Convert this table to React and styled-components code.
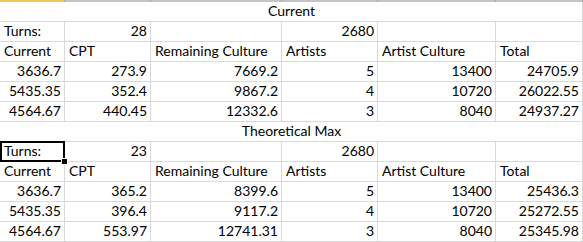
import React from 'react'
import styled, { createGlobalStyle } from 'styled-components'

const GlobalStyle = createGlobalStyle`
  html, body {
    margin: 0;
    padding: 0;
    background: #ffffff;
  }
`

const columns = [65, 86, 131, 96, 118, 87]

const sections = [
  {
    title: 'Current',
    turns: '28',
    artistCulture: '2680',
    rows: [
      ['3636.7', '273.9', '7669.2', '5', '13400', '24705.9'],
      ['5435.35', '352.4', '9867.2', '4', '10720', '26022.55'],
      ['4564.67', '440.45', '12332.6', '3', '8040', '24937.27'],
    ],
  },
  {
    title: 'Theoretical Max',
    turns: '23',
    artistCulture: '2680',
    selected: true,
    rows: [
      ['3636.7', '365.2', '8399.6', '5', '13400', '25436.3'],
      ['5435.35', '396.4', '9117.2', '4', '10720', '25272.55'],
      ['4564.67', '553.97', '12741.31', '3', '8040', '25345.98'],
    ],
  },
]

const headers = ['Current', 'CPT', 'Remaining Culture', 'Artists', 'Artist Culture', 'Total']

const App = () => {
  return (
    <>
      <GlobalStyle />
      <Sheet>
        {columns.map((w, i) => (
          <HeaderStub key={'h' + i} active={i === 0} />
        ))}
        {sections.map((s) => (
          <React.Fragment key={s.title}>
            <Title>{s.title}</Title>
            <Cell selected={s.selected}>
              Turns:
              {s.selected && <Handle />}
            </Cell>
            <Cell right>{s.turns}</Cell>
            <Cell />
            <Cell right>{s.artistCulture}</Cell>
            <Cell />
            <Cell />
            {headers.map((h) => (
              <Cell key={h}>{h}</Cell>
            ))}
            {s.rows.map((r, ri) =>
              r.map((v, ci) => (
                <Cell key={ri + '-' + ci} right>
                  {v}
                </Cell>
              ))
            )}
          </React.Fragment>
        ))}
      </Sheet>
    </>
  )
}

export default App

const Sheet = styled.div`
  display: grid;
  grid-template-columns: ${columns.map((w) => w + 'px').join(' ')};
  grid-template-rows: 2px;
  grid-auto-rows: 20px;
  width: 583px;
  font-family: Lato, 'Liberation Sans', sans-serif;
  font-size: 14px;
  color: #000000;
`
const HeaderStub = styled.div`
  background-color: ${(p) => (p.active ? '#f2c45a' : '#c4c4c4')};
  border-right: 1px solid #a9a9a9;
`
const Cell = styled.div`
  position: relative;
  box-sizing: border-box;
  display: flex;
  align-items: flex-end;
  justify-content: ${(p) => (p.right ? 'flex-end' : 'flex-start')};
  padding: 0 3px 3px 4px;
  line-height: 15px;
  white-space: nowrap;
  border-right: 1px solid #d9d9d9;
  border-bottom: 1px solid #d9d9d9;
  ${(p) =>
    p.selected &&
    `
    &::after {
      content: '';
      position: absolute;
      left: 0;
      top: -1px;
      right: -1px;
      bottom: -1px;
      border: 2px solid #000000;
      z-index: 1;
    }
  `}
`
const Title = styled(Cell)`
  grid-column: 1 / -1;
  justify-content: center;
`
const Handle = styled.span`
  position: absolute;
  right: -4px;
  bottom: -4px;
  width: 5px;
  height: 5px;
  background: #000000;
  border: 1px solid #ffffff;
  z-index: 2;
`
